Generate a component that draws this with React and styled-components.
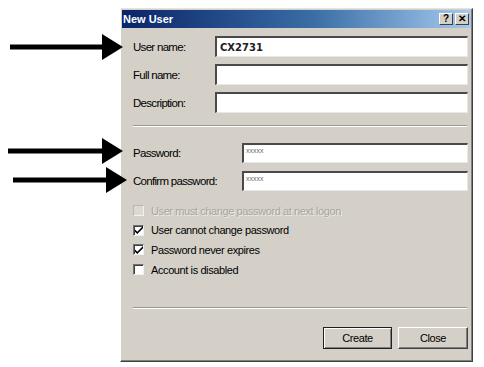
import React from 'react';
import styled, { createGlobalStyle } from 'styled-components';

const GlobalStyle = createGlobalStyle`
  html, body {
    margin: 0;
    padding: 0;
    background: #ffffff;
  }
  body {
    font-family: 'Liberation Sans', Arial, sans-serif;
  }
`;

const Page = styled.div`
  position: relative;
  width: 484px;
  height: 367px;
  padding: 8px 0 0 120px;
  box-sizing: border-box;
  overflow: hidden;
`;

const Window = styled.div`
  width: 353px;
  height: 354px;
  box-sizing: border-box;
  background: #d4d0c8;
  border: 1px solid;
  border-color: #e6e3dd #404040 #404040 #ffffff;
  box-shadow: inset -1px -1px #808080;
  padding: 1px 1px 2px 1px;
  display: flex;
  flex-direction: column;
`;

const TitleBar = styled.div`
  height: 18px;
  display: flex;
  align-items: center;
  justify-content: space-between;
  padding: 0 2px 0 1px;
  background: linear-gradient(to right, #0a246a 0%, #3a6ea5 55%, #a6caf0 100%);
`;

const Title = styled.span`
  color: #ffffff;
  font-weight: bold;
  font-size: 11px;
`;

const TitleButtons = styled.div`
  display: flex;
  gap: 2px;
`;

const TitleButton = styled.div`
  width: 14px;
  height: 12px;
  box-sizing: border-box;
  background: #d4d0c8;
  border: 1px solid;
  border-color: #ffffff #404040 #404040 #ffffff;
  display: flex;
  align-items: center;
  justify-content: center;
  font-size: 10px;
  font-weight: bold;
  color: #000;
  line-height: 1;
`;

const Body = styled.div`
  flex: 1;
  display: flex;
  flex-direction: column;
  padding: 8px 3px 0 11px;
`;

const Group = styled.div`
  display: flex;
  flex-direction: column;
  gap: ${p => p.gap}px;
`;

const FieldRow = styled.div`
  display: flex;
  align-items: center;
  height: 21px;
`;

const Label = styled.label`
  width: ${p => p.width}px;
  flex-shrink: 0;
  font-size: 11.5px;
  letter-spacing: -0.7px;
  color: #000;
`;

const Input = styled.div`
  flex: 1;
  height: ${p => (p.masked ? 20 : 21)}px;
  box-sizing: border-box;
  background: #ffffff;
  border-style: solid;
  border-width: 2px 1px 1px 2px;
  border-color: #4a4a4a #e8e8e8 #e8e8e8 #4a4a4a;
  display: flex;
  align-items: ${p => (p.masked ? 'flex-start' : 'center')};
  padding: ${p => (p.masked ? '2px 0 0 2px' : '0 0 0 3px')};
`;

const UserValue = styled.span`
  font-family: 'DejaVu Sans', sans-serif;
  font-weight: bold;
  font-size: 10px;
  color: #222;
`;

const Masked = styled.span`
  font-size: 7px;
  color: #6a6a6a;
  line-height: 7px;
`;

const Separator = styled.div`
  height: 0;
  border-top: 1px solid #9a978f;
  border-bottom: 1px solid #ffffff;
  margin: ${p => p.above}px 1px ${p => p.below}px 0;
`;

const CheckList = styled.div`
  display: flex;
  flex-direction: column;
  gap: 6.7px;
  margin-top: 13px;
`;

const CheckRow = styled.div`
  display: flex;
  align-items: center;
  height: 13px;
  gap: 7px;
`;

const Box = styled.div`
  width: 11px;
  height: 11px;
  box-sizing: border-box;
  background: ${p => (p.disabled ? '#dcd9d2' : '#ffffff')};
  border-style: solid;
  border-width: 1px;
  border-color: ${p => (p.disabled ? '#b9b6ae #f2f1ee #f2f1ee #b9b6ae' : '#707070 #f0f0f0 #f0f0f0 #707070')};
  box-shadow: ${p => (p.disabled ? 'none' : 'inset 1px 1px #404040')};
  display: flex;
  align-items: center;
  justify-content: center;
`;

const CheckText = styled.span`
  font-size: 11px;
  letter-spacing: -0.4px;
  color: ${p => (p.disabled ? '#a8a59d' : '#000')};
  text-shadow: ${p => (p.disabled ? '1px 1px 0 #ecebe7' : 'none')};
`;

const ButtonBar = styled.div`
  display: flex;
  justify-content: flex-end;
  gap: 6px;
`;

const Button = styled.div`
  width: ${p => p.width}px;
  height: 22px;
  box-sizing: border-box;
  background: #d4d0c8;
  border: 1px solid;
  border-color: ${p => (p.primary ? '#202020' : '#ffffff #404040 #404040 #ffffff')};
  box-shadow: ${p => (p.primary ? 'inset 1px 1px #ffffff, inset -1px -1px #808080' : 'inset -1px -1px #808080')};
  display: flex;
  align-items: center;
  justify-content: center;
  font-size: 11px;
  letter-spacing: -0.4px;
  color: #000;
`;

const ArrowSvg = styled.svg`
  position: absolute;
  left: 0;
  top: ${p => p.top}px;
`;

function Arrow({ top, from, tip }) {
  const headStart = tip - 21;
  return (
    <ArrowSvg top={top} width="130" height="26" viewBox="0 0 130 26">
      <rect x={from} y="10.5" width={headStart - from + 2} height="5" fill="#000" />
      <polygon points={`${headStart},0 ${tip},13 ${headStart},26`} fill="#000" />
    </ArrowSvg>
  );
}

function Check({ checked, disabled, children }) {
  return (
    <CheckRow>
      <Box disabled={disabled}>
        {checked && (
          <svg width="8" height="8" viewBox="0 0 7 7">
            <path d="M0 3 L0 5 L2 7 L7 2 L7 0 L2 5 Z" fill="#000" />
          </svg>
        )}
      </Box>
      <CheckText disabled={disabled}>{children}</CheckText>
    </CheckRow>
  );
}

export default function App() {
  return (
    <>
      <GlobalStyle />
      <Page>
        <Window>
          <TitleBar>
            <Title>New User</Title>
            <TitleButtons>
              <TitleButton>?</TitleButton>
              <TitleButton>✕</TitleButton>
            </TitleButtons>
          </TitleBar>
          <Body>
            <Group gap={7}>
              <FieldRow>
                <Label width={82}>User name:</Label>
                <Input><UserValue>CX2731</UserValue></Input>
              </FieldRow>
              <FieldRow>
                <Label width={82}>Full name:</Label>
                <Input />
              </FieldRow>
              <FieldRow>
                <Label width={82}>Description:</Label>
                <Input />
              </FieldRow>
            </Group>
            <Separator above={12} below={15} />
            <Group gap={7}>
              <FieldRow>
                <Label width={109}>Password:</Label>
                <Input masked><Masked>xxxxx</Masked></Input>
              </FieldRow>
              <FieldRow>
                <Label width={109}>Confirm password:</Label>
                <Input masked><Masked>xxxxx</Masked></Input>
              </FieldRow>
            </Group>
            <CheckList>
              <Check disabled>User must change password at next logon</Check>
              <Check checked>User cannot change password</Check>
              <Check checked>Password never expires</Check>
              <Check>Account is disabled</Check>
            </CheckList>
            <Separator above={31} below={18} />
            <ButtonBar>
              <Button primary width={69}>Create</Button>
              <Button width={70}>Close</Button>
            </ButtonBar>
          </Body>
        </Window>
        <Arrow top={34} from={10} tip={123} />
        <Arrow top={138} from={8} tip={123} />
        <Arrow top={167} from={13} tip={127} />
      </Page>
    </>
  );
}
